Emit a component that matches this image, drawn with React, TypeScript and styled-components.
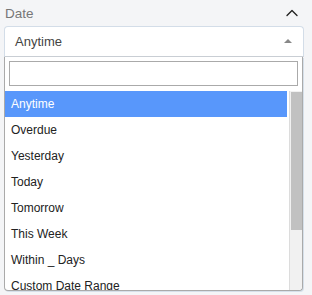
import * as React from "react";
import styled, { createGlobalStyle } from "styled-components";
import { ChevronUp } from "lucide-react";

const GlobalStyle = createGlobalStyle`
	html, body {
		margin: 0;
		padding: 0;
		background: #f4f5f7;
		font-family: "Liberation Sans", Arial, sans-serif;
	}
`;

const Panel = styled.div`
	width: 312px;
	height: 295px;
	overflow: hidden;
	padding-left: 4px;
	box-sizing: border-box;
`;

const Header = styled.div`
	display: flex;
	align-items: center;
	justify-content: space-between;
	height: 26px;
	padding: 0 10px 0 1px;
`;

const Title = styled.span`
	font-size: 13.5px;
	color: #777;
`;

const Toggle = styled(ChevronUp)`
	color: #222;
	display: block;
`;

const SelectWrap = styled.div`
	width: 300px;
	box-sizing: border-box;
`;

const Selection = styled.div`
	display: flex;
	align-items: center;
	justify-content: space-between;
	height: 31px;
	box-sizing: border-box;
	padding: 0 11px 0 10px;
	background: #fff;
	border: 1px solid #d3dde8;
	border-bottom-color: #c9ced4;
	border-radius: 4px 4px 0 0;
	font-size: 13px;
	color: #444;
`;

const Caret = styled.span`
	width: 0;
	height: 0;
	border-left: 4px solid transparent;
	border-right: 4px solid transparent;
	border-bottom: 4px solid #888;
	margin-top: -1px;
`;

const Dropdown = styled.div`
	width: 299px;
	box-sizing: border-box;
	background: #fff;
	border: 1px solid #aaa;
	border-top: none;
	border-radius: 0 0 4px 4px;
	box-shadow: 1px 1px 0 #d6e0ea;
`;

const SearchBox = styled.div`
	padding: 4px 4px 5px;
`;

const SearchInput = styled.input`
	display: block;
	width: 100%;
	height: 25px;
	box-sizing: border-box;
	border: 1px solid #aaa;
	outline: none;
	margin: 0;
	padding: 2px 4px;
	font-family: inherit;
	font-size: 12px;
`;

const Results = styled.div`
	display: flex;
	height: 199px;
	overflow: hidden;
	border-radius: 0 0 4px 4px;
`;

const Options = styled.ul`
	flex: 1;
	list-style: none;
	margin: 0;
	padding: 0 2px 0 0;
`;

const Option = styled.li<{ $active?: boolean }>`
	height: 26px;
	line-height: 26px;
	padding: 0 6px;
	font-size: 12px;
	white-space: nowrap;
	color: ${({ $active }) => ($active ? "#fff" : "#222")};
	background: ${({ $active }) => ($active ? "#5897fb" : "transparent")};
`;

const Track = styled.div`
	width: 11px;
	background: #f1f1f1;
	border-left: 1px solid #dcdcdc;
	padding: 1px 0 0 1px;
`;

const Thumb = styled.div`
	height: 138px;
	background: #c1c1c1;
`;

const options = [
	"Anytime",
	"Overdue",
	"Yesterday",
	"Today",
	"Tomorrow",
	"This Week",
	"Within _ Days",
	"Custom Date Range",
];

export default function App() {
	return (
		<>
			<GlobalStyle />
			<Panel>
				<Header>
					<Title>Date</Title>
					<Toggle size={20} strokeWidth={1.6} />
				</Header>
				<SelectWrap>
					<Selection>
						<span>Anytime</span>
						<Caret />
					</Selection>
					<Dropdown>
						<SearchBox>
							<SearchInput type="text" />
						</SearchBox>
						<Results>
							<Options>
								{options.map((o, i) => (
									<Option key={o} $active={i === 0}>
										{o}
									</Option>
								))}
							</Options>
							<Track>
								<Thumb />
							</Track>
						</Results>
					</Dropdown>
				</SelectWrap>
			</Panel>
		</>
	);
}
